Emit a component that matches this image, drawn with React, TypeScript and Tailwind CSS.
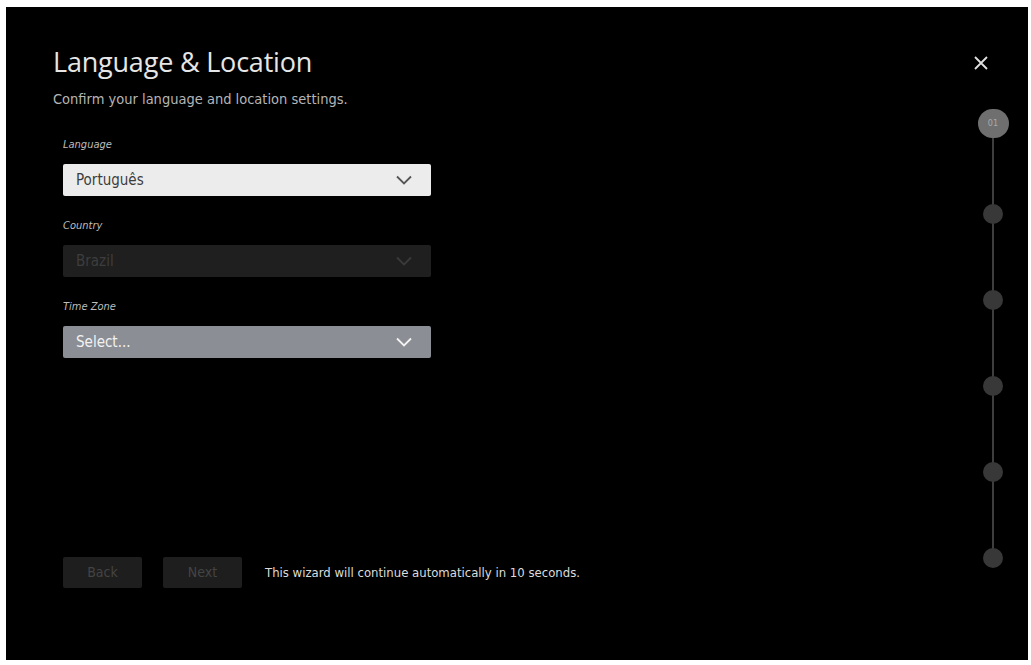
import React from "react";

const Chevron = ({ c }: { c: string }) => (
  <svg width="16" height="10" viewBox="0 0 16 10" fill="none"><path d="M1 1.5L8 8.5L15 1.5" stroke={c} strokeWidth="1.8" /></svg>
);

const Field = ({ label, value, box, text, chev }: { label: string; value: string; box: string; text: string; chev: string }) => (
  <div className="flex flex-col">
    <div className="italic text-[11px] text-[#bdbdbd] h-[27px] leading-[16px]" style={{ fontFamily: '"DejaVu Sans Condensed","DejaVu Sans",sans-serif' }}>{label}</div>
    <div className={`w-[368px] h-[32px] rounded-[2px] flex items-center justify-between pl-[13px] pr-[19px] ${box}`}>
      <span className={`text-[15px] ${text}`}>{value}</span>
      <Chevron c={chev} />
    </div>
  </div>
);

export default function App() {
  return (
    <div className="w-[1031px] h-[665px] bg-white pt-[7px] pl-[6px] pr-[3px] pb-[5px]" style={{ fontFamily: '"DejaVu Sans Condensed","DejaVu Sans",sans-serif' }}>
      <div className="w-full h-full bg-black flex">
        <div className="flex-1 flex flex-col pl-[47px]">
          <h1 className="mt-[38px] text-[27px] leading-[34px] text-[#e6e6e6] tracking-[-0.2px]" style={{ fontFamily: '"Open Sans",sans-serif' }}>Language &amp; Location</h1>
          <p className="mt-[11px] text-[14.5px] text-[#b5b5b5] leading-[18px]">Confirm your language and location settings.</p>
          <div className="pl-[10px] mt-[29px] flex flex-col gap-[22px]">
            <Field label="Language" value="Português" box="bg-[#ececec]" text="text-[#3c3c3c]" chev="#555" />
            <Field label="Country" value="Brazil" box="bg-[#1f1f1f]" text="text-[#3d3d3d]" chev="#3a3a3a" />
            <Field label="Time Zone" value="Select..." box="bg-[#8b8e94]" text="text-[#f2f2f2]" chev="#f2f2f2" />
          </div>
          <div className="pl-[10px] mt-[199px] flex items-center">
            <div className="w-[79px] h-[31px] bg-[#1e1e1e] rounded-[2px] flex items-center justify-center text-[14px] text-[#444]">Back</div>
            <div className="ml-[21px] w-[79px] h-[31px] bg-[#1e1e1e] rounded-[2px] flex items-center justify-center text-[14px] text-[#444]">Next</div>
            <span className="ml-[23px] text-[13px] text-[#dcdcdc]">This wizard will continue automatically in 10 seconds.</span>
          </div>
        </div>
        <div className="w-[72px] flex flex-col items-center pl-[2px]">
          <svg className="mt-[48px] ml-[-24px]" width="16" height="16" viewBox="0 0 16 16"><path d="M2 2L14 14M14 2L2 14" stroke="#e0e0e0" strokeWidth="1.8" /></svg>
          <div className="relative mt-[38px] flex flex-col items-center">
            <div className="absolute top-[15px] bottom-[10px] w-[2px] bg-[#3e3e3e]" />
            <div className="relative w-[31px] h-[29px] rounded-full bg-[#6f6f6f] flex items-center justify-center text-[9px] text-[#aaa]">01</div>
            {[0, 1, 2, 3, 4].map((i) => (
              <div key={i} className="relative mt-[66px] w-[20px] h-[20px] rounded-full bg-[#383838]" />
            ))}
          </div>
        </div>
      </div>
    </div>
  );
}
